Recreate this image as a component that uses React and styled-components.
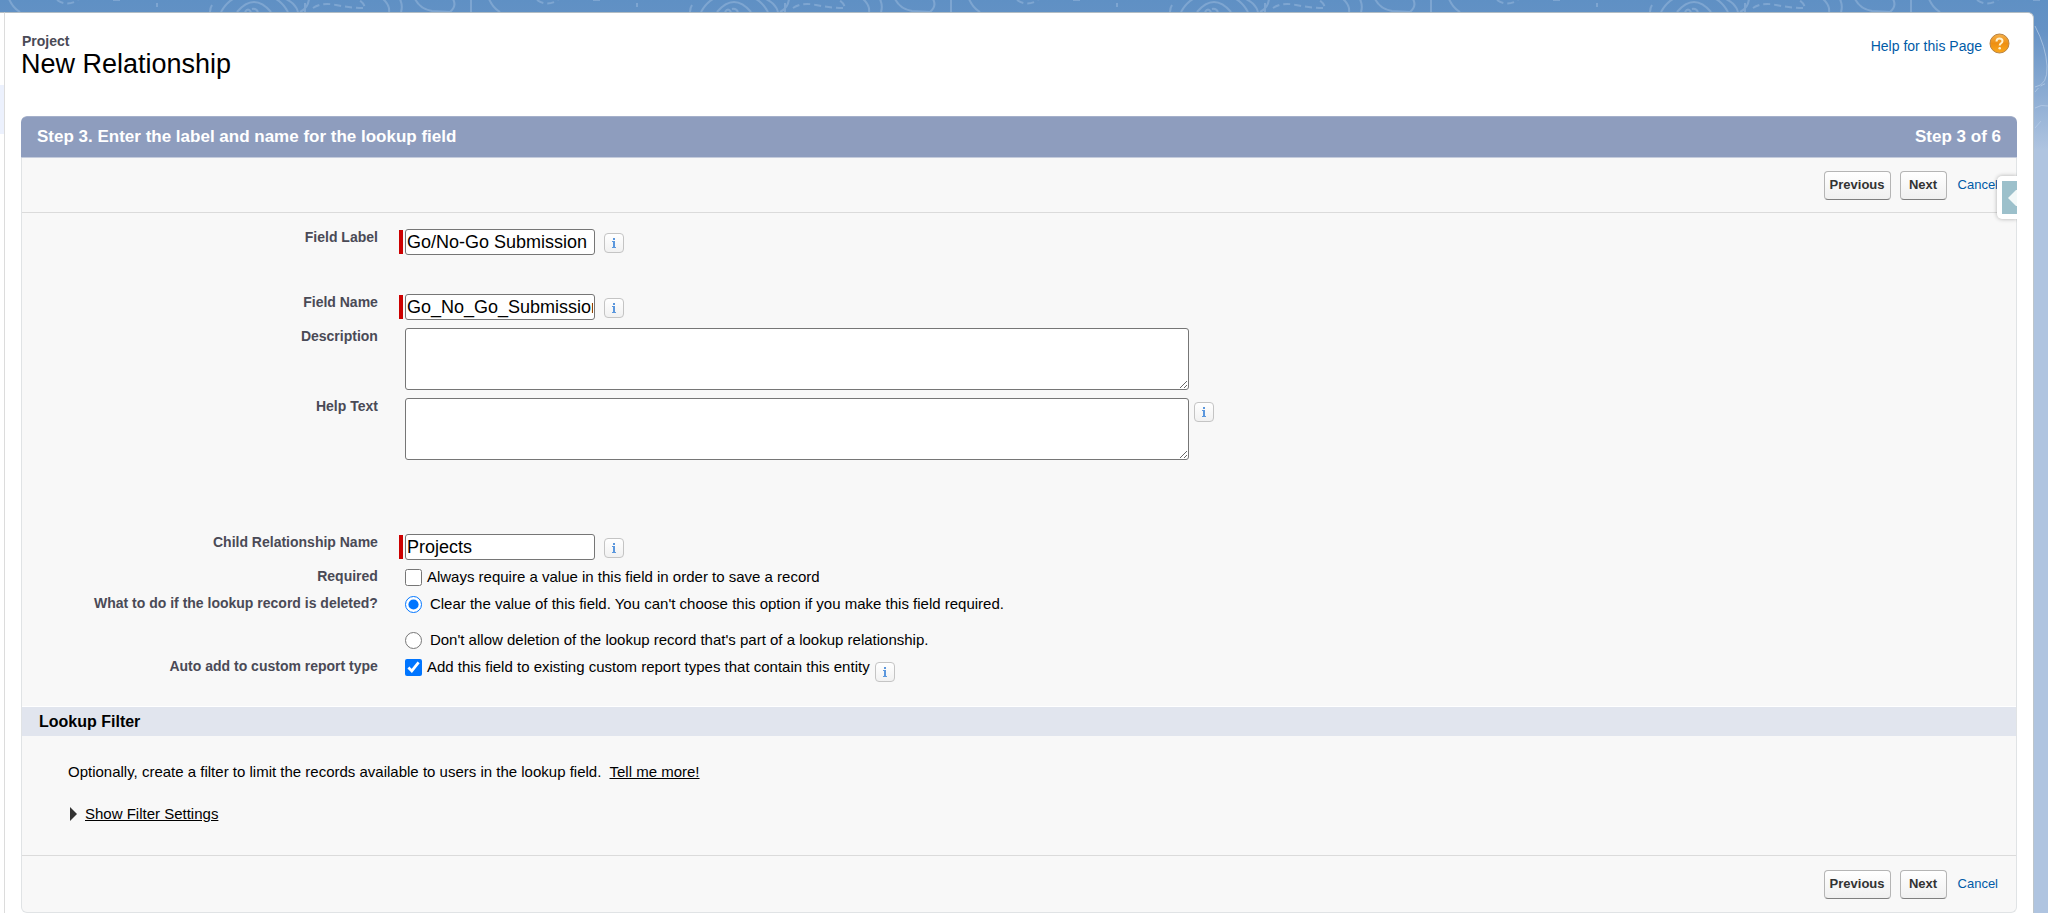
import React from "react";
import styled, { createGlobalStyle, css } from "styled-components";

const GlobalStyle = createGlobalStyle`
  *, *::before, *::after { box-sizing: border-box; }
  body {
    margin: 0;
    font-family: "Liberation Sans", Arial, Helvetica, sans-serif;
    font-size: 15px;
    line-height: 18px;
    color: #000;
    background: #b0c4e0;
  }
`;

const Page = styled.div`
  position: relative;
  display: flex;
  min-height: 100vh;
  padding: 12px 14px 0 0;
  background: linear-gradient(#5f90c4 0, #6592c5 30px, #8cacd3 95px, #afc4e0 150px, #afc4e0 100%);
`;

const Backdrop = styled.svg`
  position: absolute;
  inset: 0;
  width: 100%;
  height: 160px;
  fill: none;
  stroke: #a9c5e4;
  stroke-width: 2;
  stroke-opacity: 0.4;
`;

const EdgeDrawing = styled.svg`
  position: absolute;
  top: 0;
  right: 0;
  width: 14px;
  height: 160px;
  fill: none;
  stroke: #b9cee8;
  stroke-width: 1;
  stroke-opacity: 0.7;
`;

const SideSliver = styled.div`
  position: relative;
  width: 5px;
  padding-top: 72px;
  background: #fff;
  border-top: 1px solid #b3bdc4;
  border-right: 1px solid #dcdcdc;
`;

const SideHighlight = styled.div`
  height: 49px;
  background: #ecf1fd;
`;

const Main = styled.main`
  position: relative;
  flex: 1;
  min-width: 0;
  padding: 0 16px;
  background: #fff;
  border-top: 1px solid #b3bdc4;
  border-right: 1px solid #bcc4ca;
  border-radius: 0 6px 0 0;
`;

const PageHeader = styled.header`
  display: flex;
  justify-content: space-between;
  height: 103px;
  padding: 20px 7px 0 0;
`;

const Eyebrow = styled.p`
  margin: 0;
  padding-left: 1px;
  font-size: 14px;
  line-height: 16px;
  font-weight: bold;
  color: #4a4a56;
`;

const Title = styled.h1`
  margin: 0;
  font-size: 27px;
  line-height: 30px;
  font-weight: normal;
`;

const HelpLink = styled.a`
  display: flex;
  align-items: flex-start;
  gap: 7px;
  height: 24px;
  font-size: 14px;
  line-height: 26px;
  color: #015ba7;
  text-decoration: none;
`;

const Panel = styled.section`
  position: relative;
  overflow: clip;
  overflow-clip-margin: border-box;
  background: #f8f8f8;
  border: 1px solid #e0e3e5;
  border-top: 0;
  border-radius: 6px;
`;

const StepBar = styled.div`
  display: flex;
  justify-content: space-between;
  align-items: center;
  height: 42px;
  margin: 0 -1px;
  padding: 0 16px;
  background: #8e9dbe;
  border-top: 1px solid #a5b0ca;
  border-bottom: 1px solid #c5ccdc;
  border-radius: 6px 6px 0 0;
  color: #fff;
  font-size: 17px;
  line-height: 20px;
  font-weight: bold;
`;

const StepTitle = styled.h2`
  margin: 0;
  font: inherit;
`;

const ButtonRow = styled.div`
  display: flex;
  justify-content: flex-end;
  align-items: center;
  gap: 9px;
  height: 55px;
  padding-right: 18px;
  ${(p) =>
    p.$edge === "bottom"
      ? css`
          border-bottom: 1px solid #dbdbdb;
        `
      : css`
          border-top: 1px solid #dbdbdb;
          height: 57px;
        `}
`;

const Button = styled.button`
  height: 29px;
  padding: 0 5px;
  min-width: 47px;
  font: bold 13px/20px "Liberation Sans", Arial, sans-serif;
  color: #333;
  background: linear-gradient(#fff, #f0f0f0);
  border: 1px solid #b5b5b5;
  border-bottom-color: #7f7f7f;
  border-radius: 4px;
`;

const CancelLink = styled.a`
  padding-left: 2px;
  font-size: 13px;
  color: #015ba7;
  text-decoration: none;
`;

const SidebarTab = styled.button`
  position: absolute;
  top: 60px;
  right: -1px;
  width: 20px;
  height: 43px;
  padding: 5px 0 5px 5px;
  background: #fff;
  border: 0;
  border-radius: 5px 0 0 5px;
  box-shadow: 0 0 4px rgba(0, 0, 0, 0.3);
`;

const TabFace = styled.span`
  display: flex;
  align-items: center;
  justify-content: flex-end;
  height: 33px;
  background: #9cc0cb;
`;

const Form = styled.form`
  padding: 12px 0 25px;
`;

const Row = styled.div`
  display: grid;
  grid-template-columns: 18% 1fr;
  padding: 4px 0;
  margin-bottom: ${(p) => p.$after || 0}px;
`;

const labelStyle = css`
  padding-right: 3px;
  text-align: right;
  font-size: 14px;
  line-height: 17px;
  font-weight: bold;
  color: #4a4a56;
`;

const RowLabel = styled.label`
  ${labelStyle}
`;

const RowCaption = styled.span`
  ${labelStyle}
`;

const Control = styled.div`
  display: flex;
  align-items: flex-start;
  gap: ${(p) => p.$gap || 4}px;
  padding-left: ${(p) => (p.$required ? 18 : 24)}px;
`;

const RequiredField = styled.div`
  display: flex;
  align-items: center;
  gap: 2px;

  &::before {
    content: "";
    width: 4px;
    height: 24px;
    background: #c00;
  }
`;

const TextInput = styled.input`
  width: 190px;
  height: 26px;
  padding: 0 1px;
  font: 18px/22px "Liberation Sans", Arial, sans-serif;
  color: #000;
  background: #fff;
  border: 1px solid #767676;
  border-radius: 3px;
`;

const TextArea = styled.textarea`
  display: block;
  width: 784px;
  max-width: 100%;
  height: 62px;
  padding: 2px;
  font: 18px/20px "Liberation Sans", Arial, sans-serif;
  background: #fff;
  border: 1px solid #767676;
  border-radius: 3px;
`;

const InfoButton = styled.button`
  flex: none;
  display: flex;
  align-items: center;
  justify-content: center;
  width: 20px;
  height: 20px;
  margin-top: 4px;
  padding: 0;
  background: linear-gradient(#fff, #f1f1f1);
  border: 1px solid #c4c4c4;
  border-radius: 4px;
`;

const ChoiceList = styled.div`
  display: flex;
  flex-direction: column;
  gap: 17px;
`;

const Choice = styled.div`
  display: flex;
  align-items: flex-start;
  gap: ${(p) => p.$gap}px;
  height: 19px;
`;

const ChoiceInput = styled.input`
  width: 17px;
  height: 17px;
  margin: 1px 0 0;
  accent-color: #0075ff;
`;

const ChoiceLabel = styled.label`
  font-size: 15px;
  line-height: 18px;
`;

const SectionTitle = styled.h3`
  margin: 0;
  padding: 0 17px;
  font-size: 16px;
  line-height: 29px;
  font-weight: bold;
  background: #e1e5ee;
  border-top: 1px solid #fff;
`;

const FilterBody = styled.div`
  padding: 27px 46px 32px;
`;

const FilterText = styled.p`
  margin: 0 0 24px;
`;

const TextLink = styled.a`
  margin-left: 4px;
  color: #000;
`;

const Disclosure = styled.button`
  display: flex;
  align-items: center;
  gap: 8px;
  padding: 0 0 0 2px;
  font: 15px/18px "Liberation Sans", Arial, sans-serif;
  color: #000;
  background: none;
  border: 0;
  text-decoration: underline;
`;

function TopographicArt() {
  return (
    <>
      <Backdrop aria-hidden="true">
        <defs>
          <pattern id="contours" width="480" height="12" patternUnits="userSpaceOnUse">
            <path d="M237 12Q254-8 271 12M221 12Q226 3 233-1M276-1Q283 3 288 12M210 12Q210 8 212 5M245 12Q248 7 251 12M252 9Q256 8 258 12" />
            <path d="M286-1Q296 4 298 12M309-1Q308 8 300 12M305 3V12M383-1Q390 5 389 12M400-1Q403 6 401 12M415-1Q420 9 432 11L450 12Q457 6 453-1M471-1V12M9-1Q13 8 20 12M157 3V7" />
            <path d="M313 8Q322 2 336 5T365 8Q364 3 359 0M57 0Q67 7 78 0M113 0H122" strokeDasharray="7 4" />
          </pattern>
        </defs>
        <rect width="100%" height="12" fill="url(#contours)" stroke="none" />
      </Backdrop>
      <EdgeDrawing viewBox="0 0 14 160" aria-hidden="true">
        <path d="M1 26Q12 47 13 66T1 87M1 108Q7 104 14 106M1 128L7 121" />
        <path d="M1 92Q7 84 14 83" strokeDasharray="5 3" />
      </EdgeDrawing>
    </>
  );
}

function HelpIcon() {
  return (
    <svg width="21" height="21" viewBox="0 0 21 21" fill="none" aria-hidden="true">
      <defs>
        <linearGradient id="helpOrange" x1="0" y1="0" x2="0" y2="1">
          <stop offset="0" stopColor="#f5b04a" />
          <stop offset="0.5" stopColor="#ee8f12" />
          <stop offset="1" stopColor="#fba81c" />
        </linearGradient>
      </defs>
      <circle cx="10.500" cy="10.500" r="9.500" fill="url(#helpOrange)" stroke="#b98342" />
      <path d="M7.500 8.500Q7.500 5.500 10.500 5.500T13.500 8Q13.500 9.500 12 10.300Q10.700 11 10.700 12.500" stroke="#fff1cf" strokeWidth="2" />
      <circle cx="10.700" cy="15.300" r="1.300" fill="#fff1cf" />
    </svg>
  );
}

function Info({ subject }) {
  return (
    <InfoButton type="button" aria-label={`About ${subject}`}>
      <svg width="8" height="12" viewBox="0 0 8 12" fill="#5b97dd" aria-hidden="true">
        <path d="M3 1H5V3H3ZM2 4H5V10H6V11H2V10H3V5H2Z" />
      </svg>
    </InfoButton>
  );
}

function RequiredTextRow({ id, label, value, after }) {
  return (
    <Row $after={after}>
      <RowLabel htmlFor={id}>{label}</RowLabel>
      <Control $required $gap={9}>
        <RequiredField>
          <TextInput id={id} type="text" defaultValue={value} required />
        </RequiredField>
        <Info subject={label} />
      </Control>
    </Row>
  );
}

function TextAreaRow({ id, label, after, info }) {
  return (
    <Row $after={after}>
      <RowLabel htmlFor={id}>{label}</RowLabel>
      <Control $gap={5}>
        <TextArea id={id} />
        {info && <Info subject={label} />}
      </Control>
    </Row>
  );
}

function CheckboxRow({ id, label, text, checked, info }) {
  return (
    <Row>
      <RowLabel htmlFor={id}>{label}</RowLabel>
      <Control>
        <Choice $gap={5}>
          <ChoiceInput id={id} type="checkbox" defaultChecked={checked} />
          <ChoiceLabel htmlFor={id}>{text}</ChoiceLabel>
          {info && <Info subject={label} />}
        </Choice>
      </Control>
    </Row>
  );
}

function RadioChoice({ id, text, checked }) {
  return (
    <Choice $gap={8}>
      <ChoiceInput id={id} type="radio" name="onDelete" defaultChecked={checked} />
      <ChoiceLabel htmlFor={id}>{text}</ChoiceLabel>
    </Choice>
  );
}

function WizardButtons({ edge }) {
  return (
    <ButtonRow $edge={edge}>
      <Button type="button">Previous</Button>
      <Button type="button">Next</Button>
      <CancelLink href="#cancel">Cancel</CancelLink>
    </ButtonRow>
  );
}

export default function App() {
  return (
    <>
      <GlobalStyle />
      <Page>
        <TopographicArt />
        <SideSliver>
          <SideHighlight />
        </SideSliver>
        <Main>
          <PageHeader>
            <div>
              <Eyebrow>Project</Eyebrow>
              <Title>New Relationship</Title>
            </div>
            <HelpLink href="#help">
              Help for this Page
              <HelpIcon />
            </HelpLink>
          </PageHeader>
          <Panel>
            <StepBar>
              <StepTitle>Step 3. Enter the label and name for the lookup field</StepTitle>
              <span>Step 3 of 6</span>
            </StepBar>
            <WizardButtons edge="bottom" />
            <SidebarTab type="button" aria-label="Open sidebar">
              <TabFace>
                <svg width="9" height="18" viewBox="0 0 9 18" fill="#f2f8f8" aria-hidden="true">
                  <path d="M0 9L8 1H9V17H8Z" />
                </svg>
              </TabFace>
            </SidebarTab>
            <Form>
              <RequiredTextRow id="fieldLabel" label="Field Label" value="Go/No-Go Submission" after={31} />
              <RequiredTextRow id="fieldName" label="Field Name" value="Go_No_Go_Submission" />
              <TextAreaRow id="description" label="Description" />
              <TextAreaRow id="helpText" label="Help Text" after={66} info />
              <RequiredTextRow id="childName" label="Child Relationship Name" value="Projects" />
              <CheckboxRow
                id="alwaysRequire"
                label="Required"
                text="Always require a value in this field in order to save a record"
              />
              <Row role="radiogroup" aria-labelledby="onDeleteCaption">
                <RowCaption id="onDeleteCaption">What to do if the lookup record is deleted?</RowCaption>
                <Control>
                  <ChoiceList>
                    <RadioChoice
                      id="clearValue"
                      text="Clear the value of this field. You can't choose this option if you make this field required."
                      checked
                    />
                    <RadioChoice
                      id="restrictDelete"
                      text="Don't allow deletion of the lookup record that's part of a lookup relationship."
                    />
                  </ChoiceList>
                </Control>
              </Row>
              <CheckboxRow
                id="autoAdd"
                label="Auto add to custom report type"
                text="Add this field to existing custom report types that contain this entity"
                checked
                info
              />
            </Form>
            <SectionTitle>Lookup Filter</SectionTitle>
            <FilterBody>
              <FilterText>
                Optionally, create a filter to limit the records available to users in the lookup field.{" "}
                <TextLink href="#lookup-filters">Tell me more!</TextLink>
              </FilterText>
              <Disclosure type="button" aria-expanded="false">
                <svg width="7" height="14" viewBox="0 0 7 14" fill="#333" aria-hidden="true">
                  <path d="M0 0L7 7L0 14Z" />
                </svg>
                Show Filter Settings
              </Disclosure>
            </FilterBody>
            <WizardButtons edge="top" />
          </Panel>
        </Main>
      </Page>
    </>
  );
}
